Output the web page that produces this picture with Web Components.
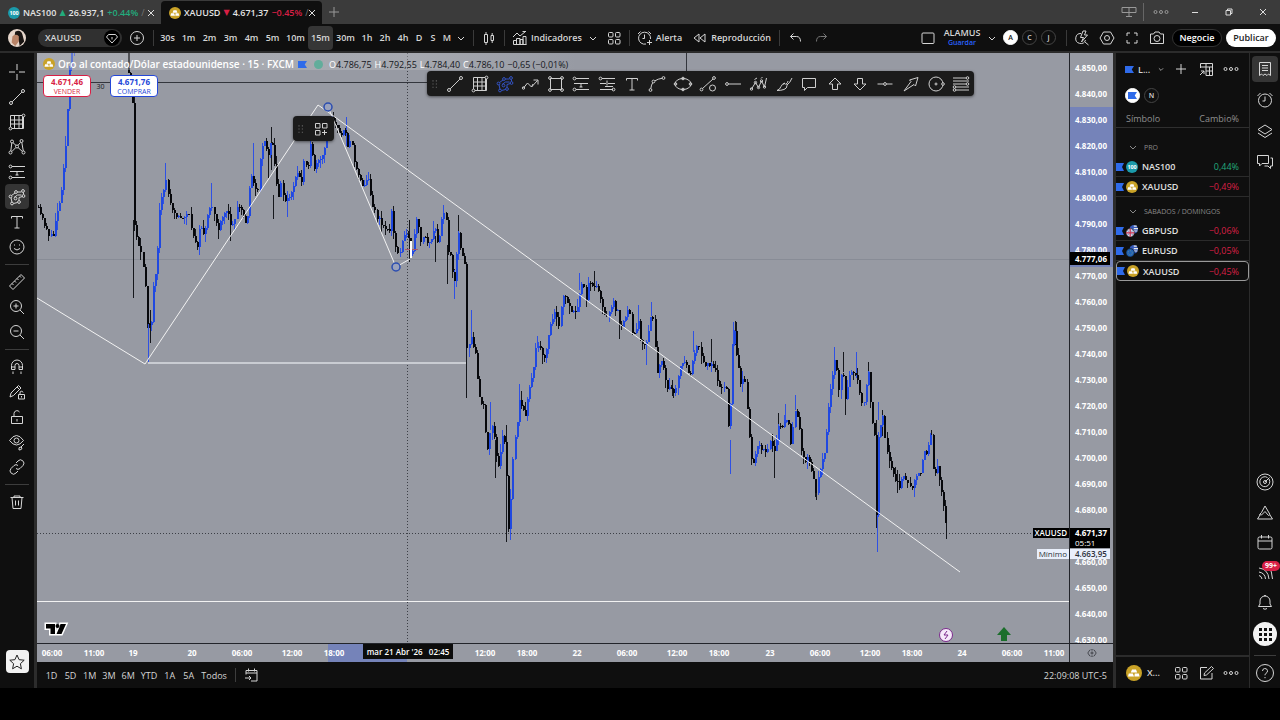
<!DOCTYPE html>
<html lang="es">
<head>
<meta charset="utf-8">
<meta name="viewport" content="width=device-width, initial-scale=1">
<title>XAUUSD 4.671,37</title>
<style>
  html, body { margin: 0; height: 100%; background: #000; }
  body {
    font-family: "Open Sans", "Noto Sans", sans-serif;
    font-size: 9px;
    color: #d6d6d6;
    --panel: #0f0f0f;
    --edge: #2c2c2c;
    --chart: #979aa3;
    --blue: #2962ff;
    --red: #d81f45;
    --green: #22ab7d;
  }
</style>
</head>
<body>
<trading-app></trading-app>

<script>
"use strict";

// Iconos sobre una rejilla de 20x20
const ICONS = {
  cross: '<path d="M10 2v6M10 12v6M2 10h6M12 10h6"/>',
  line: '<circle cx="4" cy="16" r="1.5"/><circle cx="16" cy="4" r="1.5"/><path d="M5.1 14.9 14.9 5.1"/>',
  grid: '<path d="M3.5 3.5h12v13h-12zM3.5 8h13M3.5 12h13M7.5 3.5v13M12 3.5v13M16.5 5v11.5H5"/><circle cx="16.5" cy="3.5" r="1.4" fill="var(--ibg,#0f0f0f)"/><circle cx="3.5" cy="16.5" r="1.4" fill="var(--ibg,#0f0f0f)"/>',
  pattern: '<circle cx="3.5" cy="15.5" r="1.5"/><circle cx="5" cy="4.5" r="1.5"/><circle cx="10" cy="9.5" r="1.5"/><circle cx="14.5" cy="4" r="1.5"/><circle cx="16.5" cy="15.5" r="1.5"/><path d="M3.8 14 4.8 6M6 5.7l3 2.7M11 8.4l2.5-3M14.8 5.5l1.5 8.5M4.8 14.6l4-4M11 10.5l4.4 4"/>',
  forecast: '<path d="M5 4.5h13M3 9.5h14M5 15.5h13M10 12v1M10 9.5v3M8.5 13h3"/><circle cx="3.5" cy="4.5" r="1.4"/><circle cx="3.5" cy="15.5" r="1.4"/>',
  forecast2: '<path d="M5 4.5h13M3 9.5h6M11 9.5h7M3 15.5h13M10 6.5v5M8 12.5h8"/><circle cx="3.5" cy="4.5" r="1.4"/><circle cx="16.5" cy="15.5" r="1.4"/>',
  shape: '<path d="M5 15.500 4 10.500M4.500 8.500 8 6M10.500 5h4M16.500 5.500v2M15.500 9.500 12 10.500v3M10.500 15.500l-4 1M7 10.500 10.500 8h4"/><circle cx="5" cy="16.500" r="1.400"/><circle cx="3.500" cy="9.500" r="1.400"/><circle cx="9" cy="5" r="1.400"/><circle cx="16" cy="4" r="1.400"/><circle cx="16.500" cy="9" r="1.400"/><circle cx="12" cy="15" r="1.400"/><circle cx="8.500" cy="11.500" r="1.400"/>',
  type: '<path d="M4.500 6.500v-2h11v2M10 4.500v11.500M7.500 16h5"/>',
  smile: '<circle cx="10" cy="10" r="7"/><path d="M7 11.500q3 3 6 0M7.500 7.500v1M12.500 7.500v1"/>',
  ruler: '<path d="M2.500 14 14 2.500l3.500 3.500L6 17.500zM5 11.500l1.500 1.500M7.500 9l1.500 1.500M10 6.500l1.500 1.500M12.500 4l1.500 1.500"/>',
  zoomin: '<circle cx="9" cy="9" r="5.500"/><path d="m13 13 4 4M9 6.500v5M6.500 9h5"/>',
  zoomout: '<circle cx="9" cy="9" r="5.500"/><path d="m13 13 4 4M6.500 9h5"/>',
  magnet: '<path d="M4.500 12.500V8.500a5.500 5.500 0 0 1 11 0v4h-3.500V8.500a2 2 0 0 0-4 0v4zM4.500 10H8M12 10h3.500M6 14.500v2.500M14 14.500v2.500"/>',
  penlock: '<path d="m3 15 1-4 7.500-7.500 2.500 2.500-7.500 7.500zM10 5l2.500 2.500M11.500 12.500h6v4.500h-6zM13 12.500V11a1.500 1.500 0 0 1 3-.5M14.500 14v1.500"/>',
  lock: '<path d="M4.500 9.500h11v7h-11zM7 9.500V6.500a3 3 0 0 1 5.500-1.500M10 12v2.500"/>',
  eye: '<path d="M2.500 8.500Q6 3.500 9.500 3.500t7 5Q13 13 9.500 13t-7-4.500z"/><circle cx="9.500" cy="8.500" r="2.500"/><path d="m17 12-3 3M14 15q-3 0-2 3 3 0 3-2z"/>',
  link: '<path d="m9 6 2-2a3 3 0 0 1 5 4.500l-3 3a3 3 0 0 1-4 0M11 14l-2 2a3 3 0 0 1-5-4.500l3-3a3 3 0 0 1 4 0"/>',
  trash: '<path d="M3.500 5.500h13M7 5.500V4h6v1.500M5 5.500l1 11h8l1-11M8.500 8.500v5M11.500 8.500v5"/>',
  star: '<path d="m10 3 2.100 4.700 5.100.5-3.800 3.500 1 5.100-4.400-2.600-4.400 2.600 1-5.100-3.800-3.500 5.100-.5z"/>',
  zigzag: '<path d="m2.500 14 4-5 4 4 6-6.500M12.500 6H17v4.500M10.500 13 12 10"/><circle cx="2.500" cy="14" r="1.200"/>',
  square: '<path d="M4.500 4.500h11v11h-11z"/><circle cx="4" cy="4" r="1.400"/><circle cx="16" cy="4" r="1.400"/><circle cx="4" cy="16" r="1.400"/><circle cx="16" cy="16" r="1.400"/>',
  curve: '<circle cx="3.500" cy="16" r="1.400"/><circle cx="6.500" cy="7.500" r="1.400"/><circle cx="16.500" cy="4" r="1.400"/><path d="M3.800 14.600q.5-4 2-6M8 6.800q3-2 7-2.500"/>',
  ellipse: '<ellipse cx="10" cy="10" rx="8" ry="5.500"/><circle cx="2.500" cy="10" r="1.300"/><circle cx="17.500" cy="10" r="1.300"/><circle cx="10" cy="4.500" r="1.300"/><circle cx="10" cy="15.500" r="1.300"/>',
  lineball: '<circle cx="3.500" cy="15.500" r="1.400"/><circle cx="16" cy="4" r="1.400"/><path d="m4.500 14.500 10.500-9.500"/><circle cx="14.500" cy="14" r="3"/>',
  ray: '<circle cx="4" cy="10" r="1.400"/><path d="M5.400 10H18"/>',
  waves: '<path d="m2.500 15 4-6.500 3 5 3-6.500 3 6 2-9M5.500 5.500 8 4M12 4.500l1.500-1.500"/><circle cx="2.500" cy="15" r="1.200"/><circle cx="6.500" cy="8.500" r="1.200"/><circle cx="9.500" cy="13.500" r="1.200"/><circle cx="12.500" cy="7" r="1.200"/><circle cx="15.500" cy="13" r="1.200"/>',
  brush: '<path d="M3 16.500q3-1 4-4t4-3l2 2q0 3-3 4t-7 1zM12 10q2-1 2-3M13 11q3-2 5-7M9 10l2-1"/>',
  comment: '<path d="M3.500 4.500h13v9H8.500l-3 3v-3h-2z"/>',
  up: '<path d="m10 4 6 6h-3.500v5.500h-5V10H4z"/>',
  down: '<path d="m10 16-6-6h3.500V4.500h5V10H16z"/>',
  hline: '<circle cx="10" cy="10" r="1.400"/><path d="M2.500 10h6M11.500 10h6"/>',
  arrow: '<path d="m3 17 7-9.500L8.500 6 17 3.500 14.500 12 13 10.500z"/>',
  target: '<circle cx="10" cy="10" r="7"/><circle cx="10" cy="10" r="1"/><circle cx="17" cy="10" r="1.300" fill="#1d1d1d"/>',
  levels: '<path d="M2 4h13M2 7h16M2 10h13M5 13h13M5 16h13"/><circle cx="16.500" cy="4" r="1.300"/><circle cx="16.500" cy="10" r="1.300"/><circle cx="3.500" cy="13" r="1.300"/><circle cx="3.500" cy="16" r="1.300"/>',
  chevron: '<path d="m7 9 3 3 3-3"/>',
  gem: '<circle cx="10" cy="10" r="8" fill="#000" stroke="none"/><path d="M6.500 6.500h7l2 2.500-5.500 6L4.500 9zM10 11.500V9"/>',
  pluscircle: '<circle cx="10" cy="10" r="6.500"/><path d="M10 7v6M7 10h6"/>',
  plus: '<path d="M10 5v10M5 10h10"/>',
  candles: '<path d="M5.500 6.500h3v8h-3zM7 4v2.500M7 14.500V17M12 7.500h2.500v5H12zM13.200 5v2.500M13.200 12.500V15"/>',
  indicators: '<path d="M3.500 16.500v-4h3v4M6.500 16.500v-6h3.500v6M10 16.500v-5h3v5M13 16.500V8.500h3v8zM3.500 16.500h13M3 9l4-4 3 3 5.500-4.500M12.500 3.500H16"/>',
  apps: '<rect x="4.500" y="4.500" width="4.500" height="4.500" rx="1"/><rect x="11.500" y="4.500" width="4.500" height="4.500" rx="1"/><rect x="4.500" y="11.500" width="4.500" height="4.500" rx="1"/><rect x="11.500" y="11.500" width="4.500" height="4.500" rx="1"/>',
  appsplus: '<path d="M4.500 4.500H9V9H4.500zM11.500 4.500H16V9h-4.500zM4.500 11.500H9V16H4.500zM13.500 11v5M11 13.500h5"/>',
  alert: '<path d="M11 16a6 6 0 1 1 4.500-5M9.500 6.500v4H7.500M3 6l2.500-2.500M13.500 3.500 16 6M14.500 12v5M12 14.500h5"/>',
  rewind: '<path d="M9 6v8l-5-4zM15 6v8l-5-4z"/>',
  undo: '<path d="M7.500 5.500 4.500 8.500l3 3M4.500 8.500h6q4 0 4 5"/>',
  redo: '<path d="m12.500 5.500 3 3-3 3M15.500 8.500h-6q-4 0-4 5"/>',
  layout: '<rect x="4" y="5" width="12" height="10.500" rx="1"/>',
  quick: '<path d="M9 5.500a5 5 0 1 0 4.500 6.500M13 14l3.500 3M11 3 8.500 9.500h3L9.500 14l6-7h-3L14 3z"/>',
  gear: '<path d="M6.500 4h7l3.500 6-3.500 6h-7L3 10z"/><circle cx="10" cy="10" r="2.500"/>',
  full: '<path d="M5 8V5h3M12 5h3v3M15 12v3h-3M8 15H5v-3"/>',
  camera: '<path d="M3.500 6h3l1.500-2h4l1.500 2h3v9.500h-13z"/><circle cx="10" cy="10.500" r="3"/>',
  tiles: '<path d="M3 5.500h14v5H3zM10 5.500v9M7 14.500h6"/>',
  dots: '<circle cx="4.500" cy="10" r="1.500"/><circle cx="10" cy="10" r="1.500"/><circle cx="15.500" cy="10" r="1.500"/>',
  min: '<path d="M7 10.500h6"/>',
  restore: '<path d="M7 8.500h4.500V13H7zM8.500 8.500V7H13v4.500h-1.500"/>',
  close: '<path d="m7 7 6 6M13 7l-6 6"/>',
  goto: '<path d="M5 9.500V5.500h11V16h-6M5 8h11M7.500 3.500v3M13.500 3.500v3M4 13h6M8 11l2 2-2 2"/>',
  table: '<path d="M4.500 9V4.500h12v12H10M4.500 8h12M10 4.500v12M13.500 8v8.500M10 12h6.500M4 16l4-4M5 12h3v3"/>',
  edit: '<path d="M11 4.500H4.500v11.500H16V10M8 12.500l.5-2.500 7-6.500 2 2-7 6.500z"/>',
  list: '<path d="M4.500 3.500h11v13L13.500 15 12 16.500 10 15l-2 1.500L6.500 15l-2 1.500zM7 6.500h6M7 9h6M7 11.500h6"/>',
  clock: '<circle cx="10" cy="10.500" r="6.500"/><path d="M10 6.500v4.500H7.500M2.500 6l3-3M14.500 3l3 3"/>',
  layers: '<path d="m10 4 7 4.500-7 4.500-7-4.500zM3 12l7 4.500 7-4.500"/>',
  chat: '<path d="M2.500 3.500h11v8H7l-2.500 2.500v-2.500h-2zM15.500 6h2v8h-2v2.500L13 14H9.500"/>',
  radar: '<circle cx="10" cy="10" r="8"/><path d="M14 7A5 5 0 1 1 12.500 5.500M10 10l4.500-4.500"/><circle cx="10" cy="10" r="1.500"/>',
  ideas: '<path d="m6.500 10.500 3.500-6.500 5 8.500-1.500 1-3.500-4-3.500 3.500-2-.5zM5 13l-2.500 4h15L15 13"/>',
  calendar: '<rect x="3" y="5" width="14" height="12" rx="1.500"/><path d="M3 9h14M6.500 3v3.500M13.500 3v3.500"/>',
  feed: '<path d="M4 6q9 1 10 11M4 10q6 1 6.500 7M4 13.500q2.500.5 3 3.500M14 5q3 4 3.500 12"/>',
  bell: '<path d="M3.500 14.500h13l-1.500-2.500V9a5 5 0 0 0-10 0v3zM8 16.500q2 1.500 4 0M9 4q1-1.500 2 0"/>',
  help: '<circle cx="10" cy="10" r="8.500"/><path d="M7.500 8a2.500 2.500 0 1 1 3.500 2.300q-1 .5-1 2M10 14v1.200"/>',
  scale: '<path d="M7 5.500 4 10l3 4.500M13 5.500l3 4.500-3 4.500M8 5.500h4M8 14.500h4"/><circle cx="10" cy="10" r="1.500"/>',
  grip: '<path stroke-width="1.500" d="M8 5v1.500M8 9.200v1.500M8 13.500V15M12.500 5v1.500M12.500 9.200v1.500M12.500 13.500V15"/>'
};

// Insignias de color de cada instrumento
const BADGES = {
  gold: '<circle cx="10" cy="10" r="10" fill="#c9a227"/><path fill="#fff" d="M7.500 5.500h5l1.500 4H6zM3.500 10.500h5l1.500 4H2.500zM11 10.500h5l1 4h-6.500z"/>',
  nas: '<circle cx="10" cy="10" r="10" fill="#1b9aaa"/><text x="10" y="13.500" text-anchor="middle" font-size="9" font-weight="700" fill="#fff">100</text>',
  gbp: '<circle cx="13" cy="7" r="7" fill="#3558b8"/><path stroke="#e9e9e9" stroke-width="2" d="M13 2h5M13 6h7M13 10h6"/><circle cx="7" cy="13" r="7" fill="#d9dbe8" stroke="#0f0f0f"/><path stroke="#c9304f" stroke-width="2" d="M7 6v14M0 13h14"/><path stroke="#4a5ea8" d="m2 9 3 2M12 9l-3 2M2 17l3-2M12 17l-3-2"/>',
  eur: '<circle cx="13" cy="7" r="7" fill="#3558b8"/><path stroke="#e9e9e9" stroke-width="2" d="M13 2h5M13 6h7M13 10h6"/><circle cx="7" cy="13" r="7" fill="#1f62b5" stroke="#0f0f0f"/><circle cx="7" cy="13" r="3.500" fill="none" stroke="#c9b95a" stroke-dasharray="1 2"/>',
  face: '<circle cx="10" cy="10" r="10" fill="#e6d6cb"/><path fill="#1a1513" d="M8 3q6-3 8 3l2 8-5 5-1-6-5-3z"/><path fill="#b98468" d="M5 8q4-3 7 0v6l-4 5-4-4z"/>',
  flag: '<path fill="#2f6bea" d="M0 2h20l-5 8 5 8H0z"/>'
};

// Base: pinta el template en un shadow root abierto
class BaseElement extends HTMLElement {
  constructor() {
    super();
    this.attachShadow({ mode: "open" });
  }
  connectedCallback() {
    const template = document.createElement("template");
    template.innerHTML = `<style>
      *, :host { box-sizing: border-box; }
      button { font: inherit; color: inherit; background: none; border: 0; padding: 0; margin: 0; display: flex; align-items: center; justify-content: center; cursor: pointer; }
      ui-icon, ui-badge { flex: none; }
      </style>` + this.render();
    this.shadowRoot.replaceChildren(template.content.cloneNode(true));
  }
  attr(name, fallback = "") { return this.getAttribute(name) || fallback; }
}

const iconButton = (icon, label, cls = "") =>
  `<button type="button" class="${cls}" aria-label="${label}"><ui-icon name="${icon}"></ui-icon></button>`;

customElements.define("ui-icon", class extends BaseElement {
  render() {
    return `<style>
      :host { display: block; width: 20px; height: 20px; }
      svg { display: block; width: 100%; height: 100%; fill: none; stroke: currentColor; }
    </style><svg viewBox="0 0 20 20" aria-hidden="true">${ICONS[this.attr("name")]}</svg>`;
  }
});

customElements.define("ui-badge", class extends BaseElement {
  render() {
    return `<style>
      :host { display: block; width: 12px; height: 12px; }
      svg { display: block; width: 100%; height: 100%; }
    </style><svg viewBox="0 0 20 20" preserveAspectRatio="none" aria-hidden="true">${BADGES[this.attr("name")]}</svg>`;
  }
});

// Pestañas de la ventana
customElements.define("symbol-tab", class extends BaseElement {
  render() {
    const down = this.attr("change").startsWith("−");
    return `<style>
      :host { display: flex; align-items: center; width: 161px; height: 23px; padding: 0 0 0 8px; }
      :host([active]) { background: var(--panel); border-radius: 4px 4px 0 0; }
      .tab { flex: 1; justify-content: flex-start; gap: 3px; white-space: nowrap; min-width: 0; color: #e4e4e4; }
      b { font-weight: 600; }
      .mark { font-size: 8px; color: ${down ? "var(--red)" : "var(--green)"}; font-family: "DejaVu Sans", sans-serif; }
      .chg { color: ${down ? "var(--red)" : "var(--green)"}; }
      .rest { color: #777; }
    </style>
    <button type="button" class="tab"><ui-badge name="${this.attr("badge")}"></ui-badge><b>${this.attr("symbol")}</b>
      <span class="mark">${down ? "▼" : "▲"}</span><b>${this.attr("price")}</b><b class="chg">${this.attr("change")}</b><span class="rest">/</span></button>
    ${iconButton("close", "Cerrar pestaña")}`;
  }
});

customElements.define("window-tabs", class extends BaseElement {
  render() {
    return `<style>
      :host { display: flex; align-items: center; height: 24px; background: #3b3b3b; color: #ddd; flex: none; }
      .tabs { display: flex; align-items: flex-end; height: 24px; margin-right: 2px; }
      .win { margin-left: auto; display: flex; align-items: center; }
      .win button { width: 34px; height: 24px; }
      .win .tile { width: 28px; }
      .sep { width: 1px; height: 18px; background: #666; }
      .dim { color: #999; }
    </style>
    <div class="tabs">
      <symbol-tab badge="nas" symbol="NAS100" price="26.937,1" change="+0.44%"></symbol-tab>
      <symbol-tab active badge="gold" symbol="XAUUSD" price="4.671,37" change="−0.45%"></symbol-tab>
    </div>
    ${iconButton("plus", "Nueva pestaña", "dim")}
    <div class="win">${iconButton("tiles", "Distribuir", "dim tile")}<span class="sep"></span>${iconButton("dots", "Más", "dim")}
      ${iconButton("min", "Minimizar")}${iconButton("restore", "Restaurar")}${iconButton("close", "Cerrar")}</div>`;
  }
});

// Barra superior
customElements.define("top-bar", class extends BaseElement {
  render() {
    const tf = (list, cls) => list.map(t => `<button type="button" class="${cls}${t === "15m" ? " on" : ""}">${t}</button>`).join("");
    return `<style>
      :host { display: flex; align-items: center; height: 29px; padding: 0 4px 0 8px; background: var(--panel); border-bottom: 2px solid var(--edge); flex: none; font-weight: 600; white-space: nowrap; }
      .avatar { width: 18px; height: 18px; }
      .pill { width: 84px; height: 18px; margin: 0 5px 0 12px; padding: 0 0 0 7px; border-radius: 9px; background: #303030; justify-content: space-between; }
      .group { display: flex; align-items: center; }
      .group button { height: 24px; }
      .mid { width: 21px; } .big { width: 25px; } .hour { width: 18px; } .day { width: 14px; } .drop { width: 22px; }
      .on { background: #363636; border-radius: 4px; }
      .sep { width: 1px; height: 16px; background: #3a3a3a; margin: 0 5px; }
      .sep.first { margin: 0 3px 0 6px; }
      .sep.hist { margin: 0 3px 0 8px; }
      .sep.tools { margin: 0 2px 0 8px; }
      .replay { margin-left: 8px; }
      .word { gap: 1px; }
      .right { margin-left: auto; }
      .save { flex-direction: column; margin: 0 3px 0 6px; line-height: 10px; width: 36px; }
      .save small { font-size: 7px; line-height: 9px; color: var(--blue); }
      .letter { width: 15px; height: 15px !important; margin: 0 2px; border: 1px solid #444; border-radius: 50%; font-size: 7px; }
      .letter.sel { background: #fff; color: #111; border-color: #fff; }
      .tool { width: 25px; }
      .trade, .publish { width: 50px; height: 18px !important; border-radius: 9px; }
      .trade { background: #000; border: 1px solid #333; color: #fff; margin: 0 4px 0 3px; }
      .publish { background: #fff; color: #222; }
      .dim { color: #777; }
    </style>
    <ui-badge class="avatar" name="face"></ui-badge>
    <button type="button" class="pill">XAUUSD<ui-icon name="gem"></ui-icon></button>
    ${iconButton("pluscircle", "Comparar")}<span class="sep first"></span>
    <div class="group">${tf(["30s", "1m", "2m", "3m", "4m", "5m"], "mid")}${tf(["10m", "15m", "30m"], "big")}${tf(["1h", "2h", "4h"], "hour")}${tf(["D", "S", "M"], "day")}${iconButton("chevron", "Más intervalos", "day")}</div>
    <span class="sep"></span>${iconButton("candles", "Velas")}<span class="sep"></span>
    <div class="group"><button type="button" class="word"><ui-icon name="indicators"></ui-icon>Indicadores</button>
      ${iconButton("chevron", "Favoritos", "drop")}${iconButton("apps", "Plantillas")}</div>
    <span class="sep"></span>
    <div class="group"><button type="button" class="word"><ui-icon name="alert"></ui-icon>Alerta</button></div>
    <div class="group replay"><button type="button" class="word"><ui-icon name="rewind"></ui-icon>Reproducción</button></div>
    <span class="sep hist"></span>
    <div class="group">${iconButton("undo", "Deshacer", "big")}${iconButton("redo", "Rehacer", "big dim")}</div>
    <div class="group right">${iconButton("layout", "Diseño")}
      <button type="button" class="save">ALAMUS<small>Guardar</small></button>${iconButton("chevron", "Diseños", "hour")}
      <button type="button" class="letter sel">A</button><button type="button" class="letter">C</button><button type="button" class="letter">J</button>
      <span class="sep tools"></span>
      ${iconButton("quick", "Búsqueda rápida", "tool")}${iconButton("gear", "Configuración", "tool")}${iconButton("full", "Pantalla completa", "tool")}${iconButton("camera", "Captura", "tool")}
      <button type="button" class="trade">Negocie</button><button type="button" class="publish">Publicar</button></div>`;
  }
});

// Herramientas de dibujo de la izquierda
customElements.define("tool-rail", class extends BaseElement {
  render() {
    const groups = [
      ["cross", "line", "grid", "pattern", "forecast", "shape", "type", "smile"],
      ["ruler", "zoomin", "zoomout"],
      ["magnet", "penlock", "lock", "eye", "link"],
      ["trash"]
    ];
    return `<style>
      :host { display: flex; flex-direction: column; align-items: center; width: 37px; padding: 6px 0 15px; background: var(--panel); border-right: 3px solid var(--edge); flex: none; }
      button { width: 24px; height: 25px; }
      .shape { background: #353535; border-radius: 4px; --ibg: #353535; }
      hr { width: 24px; height: 1px; margin: 5px 0 4px; border: 0; background: #3d3d3d; }
      .star { margin-top: auto; width: 23px; height: 23px; border-radius: 4px; background: #f2f2f2; color: #222; }
    </style>` + groups.map(g => g.map(n => iconButton(n, n, n)).join("")).join("<hr>") + iconButton("star", "Favoritos", "star");
  }
});

// Recorrido del precio en píxeles del panel: x,y,x,y...
const ROUTE = [37,207,40,215,43,222,46,228,49,238,53,235,56,212,60,200,63,165,66,137,68,80,71,50,75,20,120,20,126,53,131,98,133,110,134,225,138,245,142,262,145,285,147,322,151,322,152,295,156,270,159,212,162,193,165,180,168,195,171,205,176,215,181,220,187,212,191,230,197,245,200,225,204,235,208,212,212,205,216,222,218,230,222,218,226,210,230,222,234,220,237,205,242,212,246,228,250,172,253,185,258,190,260,160,263,136,268,157,271,132,274,165,278,200,280,180,284,200,288,200,293,185,297,173,301,182,303,160,308,163,310,147,314,168,320,160,324,150,328,125,330,112,335,125,340,137,344,124,347,146,351,136,353,160,357,170,362,185,368,180,372,205,377,218,380,222,385,228,389,232,391,210,394,240,397,255,400,250,404,236,408,235,411,262,414,235,416,220,420,240,424,236,427,243,432,240,434,226,438,247,440,225,443,212,446,222,448,250,451,254,453,290,456,255,457,227,460,250,464,265,465,340,467,358,470,333,473,345,475,350,477,380,480,404,483,405,485,435,488,458,490,412,493,430,495,448,498,468,500,450,502,437,504,440,505,422,507,532,509,530,511,470,513,445,516,430,519,403,523,410,525,414,528,388,532,378,535,350,538,347,541,352,545,360,547,340,551,320,554,314,558,326,561,305,564,295,567,305,571,312,576,315,580,285,582,283,586,297,588,285,592,284,596,287,600,297,605,318,607,318,612,302,617,313,620,333,624,320,628,303,631,330,635,333,638,320,640,338,645,350,648,330,650,316,653,323,655,345,657,373,660,362,664,370,666,390,670,385,673,392,677,380,680,365,685,362,689,380,692,360,694,352,698,345,702,357,705,365,711,362,714,367,718,387,722,390,727,387,729,460,731,350,734,333,737,362,740,386,743,372,746,397,748,420,750,455,753,462,756,448,760,445,764,452,768,445,771,442,775,455,777,425,781,428,785,422,788,425,790,443,793,420,796,408,799,430,801,450,804,460,808,455,812,475,815,493,818,478,821,467,825,444,828,405,831,380,835,355,838,392,842,370,845,396,849,375,853,372,857,378,860,400,863,407,866,385,868,372,871,418,875,442,876,516,878,435,882,415,884,440,888,458,891,468,895,480,899,487,903,475,907,480,912,485,916,473,920,470,924,450,927,455,930,435,934,480,937,465,941,490,944,512,946,534];

// Mechas largas: x, desde, hasta, azul(1) o negra(0)
const WICKS = [[133,220,298,0],[148,300,363,1],[150,310,343,0],[165,163,182,1],[211,183,206,1],[230,215,241,0],[253,143,180,1],[268,150,178,0],[271,127,170,0],[273,195,219,0],[287,195,217,1],[346,117,146,1],[409,220,262,0],[435,236,262,0],[443,205,218,1],[447,245,284,0],[454,270,299,1],[458,215,255,0],[466,340,398,0],[471,310,340,1],[490,402,430,1],[495,440,478,0],[506,425,542,0],[510,500,540,1],[519,384,404,1],[537,336,348,1],[556,306,326,0],[579,273,290,1],[594,271,286,0],[619,320,339,0],[638,305,322,1],[646,340,365,1],[651,302,316,1],[672,380,396,0],[693,331,352,1],[711,339,362,0],[730,440,474,1],[733,322,345,1],[735,321,345,0],[774,440,478,0],[778,413,430,0],[785,404,424,1],[795,395,410,1],[816,480,500,0],[834,347,360,1],[843,352,372,0],[845,380,415,0],[856,352,378,1],[868,362,375,0],[876,420,528,0],[877,480,552,1],[878,402,420,1],[882,410,436,0],[897,470,493,0],[931,430,440,0],[946,518,539,0]];

// Velas cada dos píxeles sobre el recorrido
function buildCandles() {
  let seed = 11;
  const rnd = () => (seed = (seed * 16807) % 2147483647) / 2147483647;
  const shapes = { up: "", down: "", upWick: "", downWick: "" };
  let k = 0, prev = ROUTE[1];
  for (let i = 0; i < 436; i++) {
    const x = Math.round(38 + i * 2.09);
    if (x > 946) break;
    while (k + 5 < ROUTE.length && ROUTE[k + 2] < x) k += 2;
    const t = (x - ROUTE[k]) / (ROUTE[k + 2] - ROUTE[k]);
    const y = Math.round(ROUTE[k + 1] + t * (ROUTE[k + 3] - ROUTE[k + 1]) + (rnd() - 0.5) * 6);
    const top = Math.min(prev, y), h = Math.max(1, Math.abs(y - prev));
    const side = y < prev ? "up" : "down";
    const w1 = Math.round(rnd() * rnd() * 11), w2 = Math.round(rnd() * rnd() * 11);
    shapes[side] += `M${x} ${top}h2v${h}h-2z`;
    shapes[side + "Wick"] += `M${x + 0.5} ${top - w1}v${h + w1 + w2}`;
    prev = y;
  }
  WICKS.forEach(([x, a, b, up]) => { shapes[up ? "upWick" : "downWick"] += `M${x + 0.5} ${a}V${b}`; });
  return shapes;
}

customElements.define("candle-plot", class extends BaseElement {
  render() {
    const c = buildCandles();
    return `<style>
      :host { display: block; width: 100%; height: 100%; }
      svg { display: block; width: 100%; height: 100%; fill: none; }
      .white { stroke: #f2f2f2; }
    </style>
    <svg viewBox="37 53 1032 590" preserveAspectRatio="none" role="img" aria-label="Velas de XAUUSD">
      <path stroke="#33363d" d="M37 82.500H686.500M686.500 53V82"/>
      <path stroke="#888c96" d="M37 259.500H1069"/>
      <path stroke="#3c3f46" stroke-dasharray="1 2" d="M407.500 53V643M37 533.500H1069"/>
      <path stroke="#15171c" d="${c.downWick}"/><path stroke="#2f51e4" d="${c.upWick}"/>
      <path fill="#07080c" d="${c.down}"/><path fill="#2049e0" d="${c.up}"/>
      <path class="white" d="M37 601.500H1069"/>
      <path stroke="#c9ccd2" stroke-width="2" d="M148 363H466"/>
      <path class="white" d="M37 298 145 364 318 105 328 112 960 572M328 107 396 267 410 259"/>
      <path stroke="#a8576c" d="M405 249.500h13"/><path stroke="#fff" stroke-width="2" d="M411 241v17"/>
      <g stroke="#2b4db0" stroke-width="1.500" fill="#9aa2bb"><circle cx="328" cy="107" r="4"/><circle cx="396" cy="267" r="4"/></g>
      <circle cx="946" cy="635" r="6.500" fill="#f6e9fa" stroke="#7b2a8c"/><path stroke="#7b2a8c" d="m947 631-3 4h4l-3 4"/>
      <path fill="#1b6e2b" d="m1004 627 7 8h-4v6h-6v-6h-4z"/>
      <path fill="#000" stroke="#fff" stroke-width="3" paint-order="stroke" d="M46 624h9v10h-4.500v-5.500H46zM60.500 624H66l-4.500 10h-5l3-7z"/>
      <circle cx="57.500" cy="626" r="2" fill="#000"/>
    </svg>`;
  }
});

// Leyenda y botones de compra y venta
customElements.define("chart-legend", class extends BaseElement {
  render() {
    return `<style>
      :host { display: block; }
      .title { display: flex; align-items: center; gap: 3px; height: 14px; color: #fff; white-space: nowrap; }
      .title b { font-size: 10px; font-weight: 600; }
      .flag { width: 9px; height: 9px; margin: 0 4px 0 1px; }
      .dot { width: 9px; height: 9px; border-radius: 50%; background: #62ad9b; margin-right: 3px; }
      .ohlc { display: flex; gap: 3px; color: #15171c; }
      .ohlc i { font-style: normal; color: #fff; }
      .deal { display: flex; align-items: center; margin-top: 4px; }
      .deal button { flex-direction: column; width: 48px; height: 22px; background: #fff; border: 1px solid; border-radius: 4px; font-size: 7px; line-height: 9px; }
      .deal b { font-size: 8px; line-height: 10px; }
      .sell { color: var(--red); } .buy { color: #2447d8; }
      .deal span { width: 19px; text-align: center; font-size: 7px; color: #15171c; }
    </style>
    <div class="title"><ui-badge name="gold"></ui-badge><b>Oro al contado/Dólar estadounidense · 15 · FXCM</b>
      <ui-badge class="flag" name="flag"></ui-badge><span class="dot"></span>
      <span class="ohlc"><span><i>O</i>4.786,75</span><span><i>H</i>4.792,55</span><span><i>L</i>4.784,40</span><span><i>C</i>4.786,10</span><span>−0,65 (−0,01%)</span></span></div>
    <div class="deal"><button type="button" class="sell"><b>4.671,46</b>VENDER</button><span>30</span><button type="button" class="buy"><b>4.671,76</b>COMPRAR</button></div>`;
  }
});

// Barra flotante con las herramientas favoritas
customElements.define("favorite-bar", class extends BaseElement {
  render() {
    return `<style>
      :host { display: flex; align-items: center; height: 25px; background: #1b1b1b; border-radius: 4px; color: #cfcfcf; --ibg: #1b1b1b; box-shadow: 0 1px 3px rgba(0,0,0,.5); }
      .grip { width: 15px; color: #666; }
      .grip ui-icon { width: 15px; }
      button { flex: 1; height: 25px; }
      button.shape { color: #3353c4; }
    </style><span class="grip"><ui-icon name="grip"></ui-icon></span>` +
      this.attr("tools").split(" ").map(n => iconButton(n, n, n)).join("");
  }
});

// Escala de precios
customElements.define("price-scale", class extends BaseElement {
  render() {
    const labels = [];
    // 4.670 queda tapado por la etiqueta del último precio
    for (let p = 4850; p >= 4630; p -= 10) labels.push(`<li>${p === 4670 ? "" : `4.${p % 1000},00`}</li>`);
    return `<style>
      :host { position: relative; display: block; width: 44px; flex: none; overflow: hidden; color: #fff; border-left: 1px solid #22242a; padding-top: 2px; background: linear-gradient(#7583b9, #7583b9) 0 54px / 100% 160px no-repeat; }
      ul { margin: 0; padding: 0; list-style: none; }
      li { height: 26px; line-height: 26px; padding-left: 5px; font-weight: 700; font-size: 8px; }
      .tag { position: absolute; left: 0; right: 3px; padding-left: 5px; font-size: 8px; line-height: 10px; font-weight: 700; background: #000; }
      .cursor { top: 199px; line-height: 13px; }
      .last { top: 475px; }
      .last span { font-weight: 400; display: block; }
      .low { top: 496px; background: #e9effb; color: #2b2f3a; font-weight: 600; }
    </style><ul>${labels.join("")}</ul>
    <div class="tag cursor">4.777,06</div><div class="tag last">4.671,37<span>05:51</span></div><div class="tag low">4.663,95</div>`;
  }
});

// Escala de tiempo: cada etiqueta ocupa el tramo desde la anterior
customElements.define("time-scale", class extends BaseElement {
  render() {
    const marks = [[15,"06:00"],[42,"11:00"],[39,"19"],[59,"20"],[50,"06:00"],[50,"12:00"],[42,"18:00"],[151,"12:00"],[42,"18:00"],[50,"22"],[50,"06:00"],[50,"12:00"],[42,"18:00"],[51,"23"],[50,"06:00"],[50,"12:00"],[42,"18:00"],[50,"24"],[50,"06:00"],[42,"11:00"],[15,""]];
    return `<style>
      :host { position: relative; display: flex; align-items: center; height: 19px; flex: none; color: #fff; font-size: 8px; font-weight: 700; border-top: 1px solid #22242a; }
      .marks { position: relative; flex: 1; display: flex; align-self: stretch; align-items: center; padding-bottom: 2px; background: linear-gradient(#7583b9, #7583b9) 291px 0 / 79px 100% no-repeat; }
      .marks div { display: flex; justify-content: flex-end; flex-basis: 0; min-width: 0; }
      .marks span { width: 0; display: flex; justify-content: center; white-space: nowrap; }
      .marks .cursor { display: block; position: absolute; left: 326px; top: 0; width: 90px; height: 15px; line-height: 16px; background: #0c0c0c; text-align: center; white-space: pre; font-weight: 600; }
      button { width: 44px; height: 18px; color: #22242a; border-left: 1px solid #22242a; }
      ui-icon { width: 14px; height: 14px; }
    </style>
    <div class="marks">${marks.map(([w, t]) => `<div style="flex-grow:${w}"><span>${t}</span></div>`).join("")}<div class="cursor">mar 21 Abr '26   02:45</div></div>
    ${iconButton("scale", "Ajustes de la escala")}`;
  }
});

customElements.define("range-bar", class extends BaseElement {
  render() {
    return `<style>
      :host { display: flex; align-items: center; height: 26px; padding: 0 6px 0 5px; background: var(--panel); flex: none; }
      button { height: 20px; min-width: 19px; padding: 0 3px; }
      .sep { width: 1px; height: 14px; background: #3d3d3d; margin: 0 5px; }
      .time { margin-left: auto; padding: 0; }
      .go { padding: 0; }
    </style>` + ["1D", "5D", "1M", "3M", "6M", "YTD", "1A", "5A", "Todos"].map(r => `<button type="button">${r}</button>`).join("") +
      `<span class="sep"></span>${iconButton("goto", "Ir a la fecha", "go")}<button type="button" class="time">22:09:08 UTC-5</button>`;
  }
});

customElements.define("chart-panel", class extends BaseElement {
  render() {
    return `<style>
      :host { display: flex; flex-direction: column; flex: 1; min-width: 0; background: var(--chart); }
      .body { display: flex; flex: 1; min-height: 0; }
      .plot { position: relative; flex: 1; min-width: 0; }
      candle-plot { position: absolute; inset: 0; }
      chart-legend { position: absolute; left: 6px; top: 4px; }
      .shade { position: absolute; left: 0; top: 0; width: 540px; height: 17px; background: linear-gradient(90deg, rgba(190,192,196,.4) 70%, rgba(190,192,196,0)); }
      .fav { position: absolute; left: 390px; top: 18px; width: 547px; }
      .mini { position: absolute; left: 256px; top: 63px; width: 41px; }
      .name { position: absolute; right: 0; font-size: 8px; line-height: 10px; padding: 0 2px; }
      .last { top: 475px; background: #000; color: #fff; font-weight: 600; }
      .low { top: 496px; background: #e9effb; color: #2b2f3a; }
    </style>
    <div class="body">
      <div class="plot"><candle-plot></candle-plot><div class="shade"></div><chart-legend></chart-legend>
        <favorite-bar class="fav" tools="line grid shape zigzag square forecast forecast2 type curve ellipse lineball ray waves brush comment up down hline arrow target levels"></favorite-bar>
        <favorite-bar class="mini" tools="appsplus"></favorite-bar>
        <div class="name last">XAUUSD</div><div class="name low">Mínimo</div></div>
      <price-scale></price-scale>
    </div>
    <time-scale></time-scale>
    <range-bar></range-bar>`;
  }
});

// Lista de seguimiento
customElements.define("watch-row", class extends BaseElement {
  render() {
    return `<style>
      :host { display: flex; align-items: center; height: 20px; padding-right: 10px; border-bottom: 1px solid #2b2b2b; color: #e0e0e0; }
      :host([selected]) { border: 1px solid #9a9a9a; border-radius: 4px; padding-right: 9px; }
      .flag { width: 8px; height: 10px; margin-right: 2px; }
      b { margin-left: 4px; font-weight: 600; }
      span { margin-left: auto; color: ${this.attr("change").startsWith("−") ? "var(--red)" : "var(--green)"}; }
    </style><ui-badge class="flag" name="flag"></ui-badge><ui-badge name="${this.attr("badge")}"></ui-badge><b>${this.attr("symbol")}</b><span>${this.attr("change")}</span>`;
  }
});

customElements.define("watch-section", class extends BaseElement {
  render() {
    return `<style>
      :host { display: block; }
      button { height: 24px; padding: 4px 0 0 7px; gap: 1px; font-size: 7px; color: #8a8a8a; }
    </style><button type="button"><ui-icon name="chevron"></ui-icon>${this.attr("label")}</button><slot></slot>`;
  }
});

customElements.define("watch-list", class extends BaseElement {
  render() {
    return `<style>
      :host { display: flex; flex-direction: column; width: 137px; flex: none; background: var(--panel); border-left: 3px solid var(--edge); border-right: 1px solid #2b2b2b; }
      .head { display: flex; align-items: center; height: 32px; padding: 0 6px 0 9px; font-weight: 600; }
      .head button:nth-child(n+2) { width: 25px; height: 24px; }
      .pick { margin-right: auto; gap: 4px; }
      .pick ui-icon { width: 14px; height: 20px; }
      .flag { width: 9px; height: 9px; }
      .marks { display: flex; gap: 4px; padding: 3px 9px; }
      .marks button { width: 15px; height: 15px; border-radius: 50%; border: 1px solid #444; font-size: 7px; font-weight: 600; }
      .marks .sel { background: #fff; border-color: #fff; }
      .cols { display: flex; align-items: center; justify-content: space-between; height: 22px; padding: 3px 10px 0; color: #8f8f8f; border-bottom: 1px solid #2f2f2f; }
      watch-section:first-of-type { margin-top: 5px; }
      .foot { display: flex; align-items: center; height: 33px; margin-top: auto; padding: 0 6px 0 10px; border-top: 2px solid var(--edge); font-weight: 600; }
      .foot button:nth-child(n+2) { width: 25px; height: 24px; }
      .foot .pick { gap: 5px; }
      .foot ui-badge { width: 16px; height: 16px; }
    </style>
    <div class="head"><button type="button" class="pick"><ui-badge class="flag" name="flag"></ui-badge>L...<ui-icon name="chevron"></ui-icon></button>${iconButton("plus", "Añadir símbolo")}${iconButton("table", "Vista de tabla")}${iconButton("dots", "Más")}</div>
    <div class="marks"><button type="button" class="sel" aria-label="Lista azul"><ui-badge class="flag" name="flag"></ui-badge></button><button type="button">N</button></div>
    <div class="cols"><span>Símbolo</span><span>Cambio%</span></div>
    <watch-section label="PRO">
      <watch-row badge="nas" symbol="NAS100" change="0,44%"></watch-row>
      <watch-row badge="gold" symbol="XAUUSD" change="−0,49%"></watch-row>
    </watch-section>
    <watch-section label="SABADOS / DOMINGOS">
      <watch-row badge="gbp" symbol="GBPUSD" change="−0,06%"></watch-row>
      <watch-row badge="eur" symbol="EURUSD" change="−0,05%"></watch-row>
      <watch-row selected badge="gold" symbol="XAUUSD" change="−0,45%"></watch-row>
    </watch-section>
    <div class="foot"><button type="button" class="pick"><ui-badge name="gold"></ui-badge>X...</button>${iconButton("apps", "Paneles")}${iconButton("edit", "Notas")}${iconButton("dots", "Más")}</div>`;
  }
});

customElements.define("side-rail", class extends BaseElement {
  render() {
    return `<style>
      :host { display: flex; flex-direction: column; align-items: center; width: 30px; flex: none; background: var(--panel); padding-top: 1px; }
      button { width: 26px; height: 26px; margin: 2px 0; border-radius: 4px; position: relative; }
      .top { display: flex; flex-direction: column; gap: 1px; }
      .bottom { margin-top: auto; display: flex; flex-direction: column; align-items: center; }
      .list { background: #353535; }
      .apps { width: 24px; height: 24px; margin: 5px 0 3px; border-radius: 50%; background: #f2f2f2; }
      .apps i { width: 3px; height: 3px; background: #111; }
      .apps span { display: grid; grid-template-columns: repeat(3, 3px); gap: 2px; }
      .count { position: absolute; right: -2px; top: 2px; padding: 0 3px; border-radius: 5px; background: var(--red); color: #fff; font-size: 7px; line-height: 10px; font-weight: 700; }
      hr { width: 22px; height: 1px; margin: 6px 0 2px; border: 0; background: #3d3d3d; }
    </style>
    <div class="top">${["list", "clock", "layers", "chat"].map(n => iconButton(n, n, n)).join("")}</div>
    <div class="bottom">${["radar", "ideas", "calendar"].map(n => iconButton(n, n, n)).join("")}
      <button type="button" aria-label="Noticias"><ui-icon name="feed"></ui-icon><span class="count">99+</span></button>${iconButton("bell", "Notificaciones")}
      <button type="button" class="apps" aria-label="Aplicaciones"><span>${"<i></i>".repeat(9)}</span></button><hr>${iconButton("help", "Ayuda")}</div>`;
  }
});

customElements.define("trading-app", class extends BaseElement {
  render() {
    return `<style>
      :host { display: flex; flex-direction: column; height: 100vh; padding-bottom: 32px; }
      main { display: flex; flex: 1; min-height: 0; }
    </style>
    <window-tabs></window-tabs>
    <top-bar></top-bar>
    <main><tool-rail></tool-rail><chart-panel></chart-panel><watch-list></watch-list><side-rail></side-rail></main>`;
  }
});
</script>
</body>
</html>
